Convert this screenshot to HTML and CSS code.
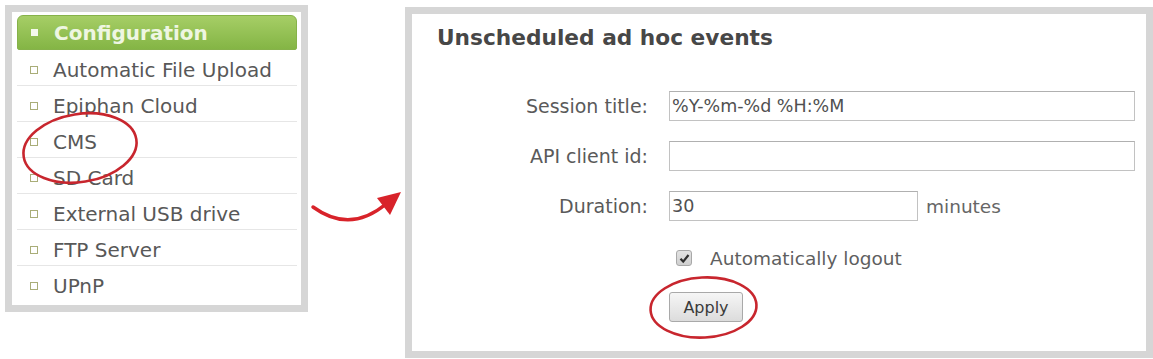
FILE: index.html
```html
<!DOCTYPE html>
<html>
<head>
<meta charset="utf-8">
<link rel="stylesheet" href="styles.css">
</head>
<body>
<div class="page">
  <div class="menu">
    <div class="menu-head"><span class="head-bullet"></span>Configuration</div>
    <ul class="menu-list">
      <li><span class="bullet"></span>Automatic File Upload</li>
      <li><span class="bullet"></span>Epiphan Cloud</li>
      <li><span class="bullet"></span>CMS</li>
      <li><span class="bullet"></span>SD Card</li>
      <li><span class="bullet"></span>External USB drive</li>
      <li><span class="bullet"></span>FTP Server</li>
      <li><span class="bullet"></span>UPnP</li>
    </ul>
  </div>
  <div class="arrow-col">
    <svg class="arrow" width="97" height="60" viewBox="308 180 97 60">
      <path d="M313 207 Q350 234 386 204" fill="none" stroke="#d8232a" stroke-width="3.5" stroke-linecap="round"/>
      <polygon points="377,198 401,192 390,215" fill="#d8232a"/>
    </svg>
  </div>
  <div class="panel">
    <h2 class="title">Unscheduled ad hoc events</h2>
    <div class="form">
      <label class="label">Session title:</label>
      <input class="field" type="text" value="%Y-%m-%d %H:%M">
      <label class="label">API client id:</label>
      <input class="field" type="text" value="">
      <label class="label">Duration:</label>
      <div class="duration">
        <input class="field field-short" type="text" value="30">
        <span class="unit">minutes</span>
      </div>
      <div class="check-row">
        <span class="check">
          <svg width="11" height="11" viewBox="0 0 11 11"><path d="M1.5 5.8 L4.2 8.6 L9.5 2" fill="none" stroke="#2e2e2e" stroke-width="2.2"/></svg>
        </span>
        <span class="check-label">Automatically logout</span>
      </div>
      <div class="button-row">
        <button class="apply" type="button">Apply</button>
      </div>
    </div>
  </div>
  <svg class="marks" width="1153" height="359" viewBox="0 0 1153 359">
    <ellipse cx="80" cy="148" rx="57" ry="34" transform="rotate(-9 80 148)" fill="none" stroke="#c8262e" stroke-width="2.6"/>
    <ellipse cx="703.5" cy="307.5" rx="53" ry="30" transform="rotate(-3 703.5 307.5)" fill="none" stroke="#c8262e" stroke-width="2.6"/>
  </svg>
</div>
</body>
</html>
```
FILE: styles.css
```css
* { box-sizing: border-box; }
html, body { margin: 0; padding: 0; background: #fff; }
body { font-family: "DejaVu Sans", Verdana, sans-serif; color: #555; }

.page {
  position: relative;
  display: flex;
  align-items: flex-start;
  padding: 5px 0 0 5px;
  width: 1153px;
  height: 359px;
}

/* left menu */
.menu {
  width: 303px;
  height: 307px;
  border: 7px solid #d6d6d6;
  padding: 3px 4px 0 5px;
  background: #fff;
}
.menu-head {
  height: 35px;
  display: flex;
  align-items: center;
  padding-left: 13px;
  font-size: 20px;
  font-weight: bold;
  color: #eef6e2;
  background: linear-gradient(#a6ce66, #84b545);
  border: 1px solid #86b24a;
  border-radius: 6px 6px 2px 2px;
}
.head-bullet {
  width: 7px;
  height: 7px;
  background: #f4f9ec;
  margin-right: 16px;
}
.menu-list {
  list-style: none;
  margin: 0;
  padding: 0;
}
.menu-list li {
  height: 36px;
  display: flex;
  align-items: center;
  padding: 4px 0 0 13px;
  font-size: 20px;
  color: #585858;
  border-bottom: 1px solid #e6e6e6;
}
.menu-list li:last-child { border-bottom: none; }
.bullet {
  width: 8px;
  height: 8px;
  border: 1.5px solid #a9ad78;
  margin-right: 15px;
  flex: none;
}

/* arrow */
.arrow-col {
  width: 97px;
  flex: none;
}
.arrow {
  display: block;
  margin-top: 175px;
}

/* right panel */
.panel {
  width: 748px;
  height: 351px;
  margin-top: 2px;
  border: 7px solid #d6d6d6;
  padding: 11px 11px 0 25px;
  background: #fff;
}
.title {
  margin: 0 0 40px;
  font-size: 21.7px;
  line-height: 26px;
  font-weight: bold;
  color: #474747;
}
.form {
  display: grid;
  grid-template-columns: 211px 1fr;
  column-gap: 21px;
  row-gap: 20px;
  align-items: center;
}
.label {
  text-align: right;
  font-size: 19px;
  color: #5a5a5a;
}
.field {
  height: 30px;
  width: 100%;
  border: 1px solid #c2c2c2;
  border-top-color: #b0b0b0;
  padding: 0 2px;
  font-family: "DejaVu Sans", Verdana, sans-serif;
  font-size: 17.5px;
  color: #505050;
  background: #fff;
  outline: none;
}
.duration {
  display: flex;
  align-items: center;
  gap: 8px;
}
.field-short { width: 249px; }
.unit { font-size: 18.5px; color: #666; }

.check-row {
  grid-column: 2;
  height: 30px;
  margin-top: 2px;
  display: flex;
  align-items: center;
  padding-left: 7px;
}
.check {
  width: 16px;
  height: 16px;
  border: 1px solid #a8a8a8;
  border-radius: 3px;
  background: linear-gradient(#e2e2e2, #cfcfcf);
  display: flex;
  align-items: center;
  justify-content: center;
  margin-right: 18px;
}
.check svg { display: block; }
.check-label { font-size: 18.5px; color: #5f5f5f; }

.button-row {
  grid-column: 2;
  margin-top: -1px;
}
.apply {
  width: 74px;
  height: 30px;
  font-family: "DejaVu Sans", Verdana, sans-serif;
  font-size: 16px;
  color: #3a3a3a;
  border: 1px solid #a9a9a9;
  border-radius: 3px;
  background: linear-gradient(#f6f6f6, #dcdcdc);
  padding: 0;
}

.marks {
  position: absolute;
  top: 0;
  left: 0;
  pointer-events: none;
}
```
